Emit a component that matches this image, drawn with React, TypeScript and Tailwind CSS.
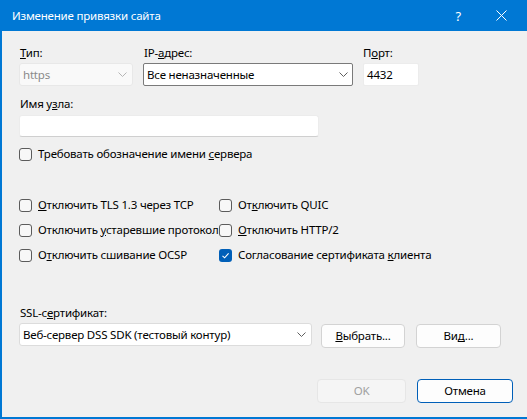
import React from "react";

const font = "font-['Noto_Sans',sans-serif] tracking-[-0.2px]";

const Chevron = ({ light }: { light?: boolean }) => (
  <svg width="9" height="5" viewBox="0 0 9 5" className="shrink-0">
    <path
      d="M0.5 0.5 L4.5 4.5 L8.5 0.5"
      fill="none"
      stroke={light ? "#b5b5b5" : "#5f5f5f"}
      strokeWidth="1"
    />
  </svg>
);

const Check = ({ checked, children }: { checked?: boolean; children: React.ReactNode }) => (
  <label className="flex h-4 items-center gap-[6px] whitespace-nowrap">
    {checked ? (
      <span className="flex h-[13px] w-[13px] shrink-0 items-center justify-center rounded-[3px] bg-[#005fb8]">
        <svg width="9" height="9" viewBox="0 0 9 9">
          <path d="M1.5 4.8 L3.6 6.8 L7.6 2.4" fill="none" stroke="#fff" strokeWidth="1.1" />
        </svg>
      </span>
    ) : (
      <span className="h-[13px] w-[13px] shrink-0 rounded-[3px] border border-[#5b5b5b] bg-[#f7f7f7]" />
    )}
    <span className="leading-4">{children}</span>
  </label>
);

const Button = ({ children, className = "" }: { children: React.ReactNode; className?: string }) => (
  <button
    className={`flex h-[24px] items-center justify-center rounded-[4px] border border-[#d3d3d3] bg-[#fdfdfd] text-[11.5px] text-black ${className}`}
  >
    {children}
  </button>
);

export default function App() {
  return (
    <div className={`flex h-[419px] w-[527px] flex-col overflow-hidden bg-[#f0f0f0] text-[11.5px] text-black ${font}`}>
      <div className="flex h-[31px] shrink-0 items-center bg-[#0078d4] pl-[12px] text-white">
        <span className="flex-1 leading-4">Изменение привязки сайта</span>
        <span className="mr-[35px] text-[13px] leading-4">?</span>
        <svg width="11" height="11" viewBox="0 0 11 11" className="mr-[20px]">
          <path d="M0.5 0.5 L10.5 10.5 M10.5 0.5 L0.5 10.5" stroke="#fff" strokeWidth="1" />
        </svg>
      </div>

      <div className="flex flex-1 flex-col border-b-2 border-l-2 border-[#0078d4] pl-[17px]">
        {/* Тип / IP / Порт */}
        <div className="mt-[14px] flex">
          <div className="flex w-[114px] flex-col">
            <span className="pl-[1px] leading-4">
              <u>Т</u>ип:
            </span>
            <div className="mt-[2px] flex h-[23px] items-center justify-between rounded-[3px] border border-[#e8e8e8] bg-[#f9f9f9] pl-[3px] pr-[5px] text-[#8a8a8a]">
              <span>https</span>
              <Chevron light />
            </div>
          </div>
          <div className="ml-[10px] flex w-[210px] flex-col">
            <span className="pl-[1px] leading-4">
              IP-<u>а</u>дрес:
            </span>
            <div className="mt-[2px] flex h-[23px] items-center justify-between rounded-[2px] border border-[#7a7a7a] bg-white pl-[3px] pr-[4px]">
              <span>Все неназначенные</span>
              <Chevron />
            </div>
          </div>
          <div className="ml-[10px] flex w-[56px] flex-col">
            <span className="leading-4">
              П<u>о</u>рт:
            </span>
            <div className="mt-[2px] flex h-[23px] items-center rounded-[2px] border border-[#ececec] bg-white pl-[3px]">
              <span>4432</span>
            </div>
          </div>
        </div>

        {/* Имя узла */}
        <span className="mt-[10px] pl-[1px] leading-4">
          Имя у<u>з</u>ла:
        </span>
        <div className="mt-[3px] h-[22px] w-[300px] rounded-[3px] border border-[#ececec] border-b-[#cfcfcf] bg-white" />

        <div className="mt-[9px]">
          <Check>
            Требовать обозначение имени <u>с</u>ервера
          </Check>
        </div>

        {/* Options grid */}
        <div className="mt-[35px] grid grid-cols-[200px_1fr] gap-y-[9px]">
          <Check>
            <u>О</u>тключить TLS 1.3 через TCP
          </Check>
          <Check>
            От<u>к</u>лючить QUIC
          </Check>
          <div className="w-[200px] overflow-hidden">
            <Check>
              Отключить <u>у</u>старевшие протоколы
            </Check>
          </div>
          <Check>
            <u>О</u>тключить HTTP/2
          </Check>
          <Check>
            О<u>т</u>ключить сшивание OCSP
          </Check>
          <Check checked>
            Согласование сертификата <u>к</u>лиента
          </Check>
        </div>

        {/* SSL */}
        <span className="mt-[42px] pl-[1px] leading-4">
          SSL-с<u>е</u>ртификат:
        </span>
        <div className="mt-[2px] flex items-start">
          <div className="flex h-[23px] w-[293px] items-center justify-between rounded-[3px] border border-[#dcdcdc] bg-white pl-[3px] pr-[5px]">
            <span>Веб-сервер DSS SDK (тестовый контур)</span>
            <Chevron />
          </div>
          <Button className="ml-[9px] mt-[1px] w-[84px]">
            <span>
              <u>В</u>ыбрать...
            </span>
          </Button>
          <Button className="ml-[11px] mt-[1px] w-[85px]">
            <span>
              Ви<u>д</u>...
            </span>
          </Button>
        </div>

        {/* OK / Cancel */}
        <div className="mt-[31px] flex">
          <button className="ml-[298px] flex h-[24px] w-[89px] items-center justify-center rounded-[4px] border border-[#e6e6e6] bg-[#f5f5f5] text-[11.5px] text-[#a0a0a0]">
            OK
          </button>
          <button className="ml-[11px] flex h-[24px] w-[96px] items-center justify-center rounded-[4px] border-[1.5px] border-[#005fb8] bg-[#fdfdfd] text-[11.5px] text-black">
            Отмена
          </button>
        </div>
      </div>
    </div>
  );
}
